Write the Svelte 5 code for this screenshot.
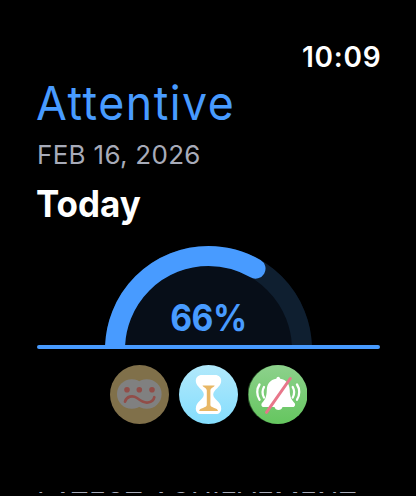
<script>
    export let title = 'Attentive'
    export let date = 'FEB 16, 2026'
    export let percent = 66

    //Centre line of the gauge stroke
    const radius = 93.5
    const length = Math.PI * radius
    $: filled = length * percent / 100
</script>

<main>
    <div class="clock">10:09</div>
    <h1>{title}</h1>
    <div class="date">{date}</div>
    <h2>Today</h2>

    <div class="gauge">
        <svg width="207" height="99" viewBox="0 0 207 99">
            <path d="M0 103.5a103.5 103.5 0 0 1 207 0z" fill="#070e18" />
            <path d="M10 103.5a93.5 93.5 0 0 1 187 0" fill="none" stroke="#0f1f30" stroke-width="20" />
            <path d="M10 103.5a93.5 93.5 0 0 1 187 0" fill="none" stroke="#489bff" stroke-width="20"
                stroke-linecap="round" stroke-dasharray="{filled + 2} 600" />
        </svg>
        <span class="percent">{percent}%</span>
    </div>
    <div class="line"></div>

    <div class="badges">
        <svg width="60" height="60" viewBox="0 0 60 60">
            <circle cx="29.5" cy="29.5" r="29.5" fill="#80704a" />
            <g fill="#808080">
                <circle cx="21.8" cy="29" r="14.8" />
                <circle cx="36.8" cy="29" r="14.8" />
            </g>
            <g fill="#914d48">
                <circle cx="17" cy="24.7" r="2.8" />
                <circle cx="29.3" cy="24.7" r="2.8" />
                <circle cx="42" cy="24.7" r="2.8" />
            </g>
            <path d="M15 36.7C16.5 31.3 22.5 29.8 27 33C31 36 34.5 38.3 38 37.5C41.5 36.8 43.7 35 44.3 32.2" fill="none" stroke="#914d48" stroke-width="2.7" stroke-linecap="round" />
        </svg>
        <svg width="60" height="60" viewBox="0 0 60 60">
            <defs>
                <linearGradient id="sky" x1="0" y1="0" x2="0" y2="1">
                    <stop offset="0" stop-color="#b2e9fb" />
                    <stop offset="1" stop-color="#84ddfd" />
                </linearGradient>
            </defs>
            <circle cx="29.5" cy="29.5" r="29.5" fill="url(#sky)" />
            <path d="M23 10h13c4 0 6.2 2.5 6.2 6c0 6-8 8.5-8 13.5s8 7 8 14c0 3.5-2 5.5-5 5.5h-15.400c-3 0-5-2-5-5.500c0-7 8-9 8-14s-8-7.500-8-13.500c0-3.500 2.200-6 6.200-6z" fill="#fff" />
            <path d="M23.5 20.5h12.2c-.8 2-4.3 2.5-4.3 5v14.5c0 3 7.600 2.700 7.600 6h-18.800c0-3.300 7.600-3 7.600-6v-14.500c0-2.500-3.500-3-4.300-5z" fill="#e8b765" />
        </svg>
        <svg width="60" height="60" viewBox="0 0 60 60">
            <defs>
                <linearGradient id="leaf" x1="0" y1="0" x2="0" y2="1">
                    <stop offset="0" stop-color="#8dd18c" />
                    <stop offset="1" stop-color="#65c65f" />
                </linearGradient>
            </defs>
            <circle cx="29" cy="29.5" r="29.5" fill="#275026" />
            <circle cx="30" cy="29.5" r="29.5" fill="url(#leaf)" />
            <path d="M28.3 13.8c.5-2.8 3.4-2.8 3.9 0c6.3 1 9.3 5.3 9.5 11.2c.2 7 1.7 9.700 4.800 13c1.200 1.400.6 4-1.500 4h-10.500c-.8 4-7.200 4-8 0h-11c-2.100 0-2.700-2.600-1.500-4c3.100-3.300 4.600-6 4.800-13c.2-5.900 3.200-10.200 9.500-11.200z" fill="#fff" />
            <path d="M16 22c-1.8 3.2-1.8 7.3 0 10.5M11.500 19.5c-3 4.500-3 10.700 0 15.200M44.700 22c1.800 3.200 1.800 7.300 0 10.500M49 19.500c3 4.500 3 10.700 0 15.200" fill="none" stroke="#fff" stroke-width="2.3" stroke-linecap="round" />
            <path d="M18.5 47.3L42.3 13.5" fill="none" stroke="#e8768a" stroke-width="3" stroke-linecap="round" />
        </svg>
    </div>

    <div class="next">LATEST ACHIEVEMENT</div>
</main>

<style>
    :global(body){
        background:#000;
    }
    main{
        box-sizing:border-box;
        width:416px;
        height:493px;
        padding:41px 36px 0 37px;
        overflow:hidden;
        color:#fff;
        font-family:Inter, "Liberation Sans", sans-serif;
        white-space:nowrap;
    }
    .clock{
        height:32px;
        margin-right:-1.5px;
        line-height:32px;
        text-align:right;
        font-size:28px;
        font-weight:600;
        letter-spacing:.8px;
    }
    h1{
        margin:0 0 0 -.8px;
        height:60px;
        line-height:60px;
        font-size:47px;
        font-weight:400;
        letter-spacing:1.6px;
        color:#489bff;
        transform:scaleX(.95);
        transform-origin:left;
    }
    .date, .next{
        height:44px;
        line-height:44px;
        font-size:26px;
        letter-spacing:.3px;
        color:#a7abb9;
    }
    h2{
        margin:0 0 0 -1px;
        height:56px;
        line-height:54px;
        font-size:37px;
        font-weight:700;
        transform:scaleX(.945);
        transform-origin:left;
    }
    .gauge{
        position:relative;
        box-sizing:border-box;
        height:112px;
        padding:13px 0 0 68px;
    }
    .gauge svg{
        display:block;
    }
    .percent{
        position:absolute;
        left:0;
        right:0;
        bottom:4px;
        line-height:46px;
        text-align:center;
        font-size:37px;
        font-weight:700;
        letter-spacing:-.5px;
        color:#489bff;
        transform:scaleX(.91);
    }
    .line{
        height:4px;
        border-radius:2px;
        background:#489bff;
    }
    .badges{
        display:flex;
        gap:9px;
        width:197px;
        height:60px;
        margin:16px 0 0 73px;
        overflow:hidden;
    }
    .badges svg{
        flex:none;
    }
    .next{
        margin-top:55.5px;
        font-size:28px;
        letter-spacing:.4px;
    }
</style>
